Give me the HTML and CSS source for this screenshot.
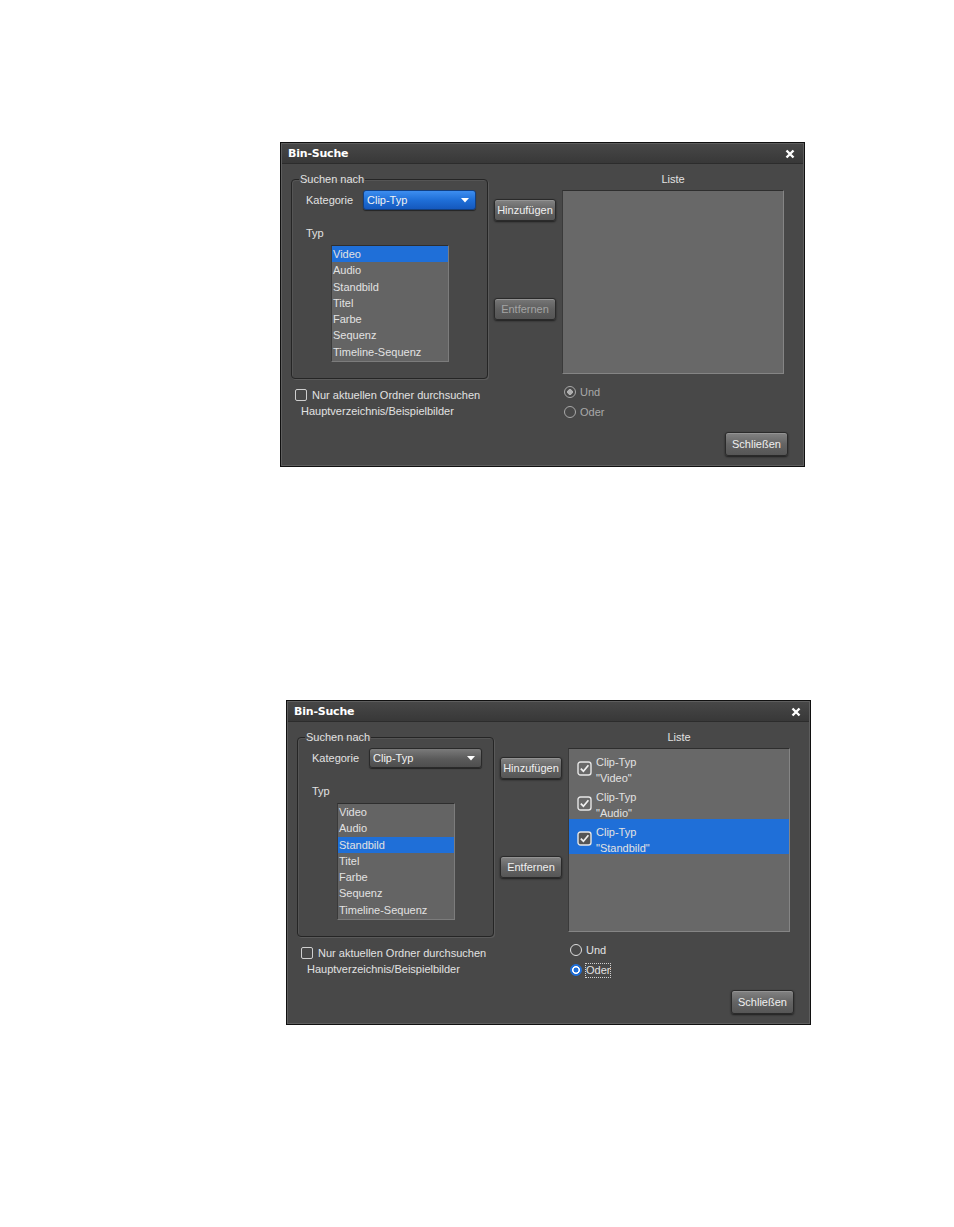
FILE: index.html
```html
<!DOCTYPE html>
<html lang="de">
<head>
  <meta charset="UTF-8">
  <title>Bin-Suche</title>
  <link rel="stylesheet" href="styles.css">
</head>
<body>
  <div class="page">

    <!-- first state: empty list, category focused -->
    <div class="dialog first">
      <div class="titlebar">
        <span class="title">Bin-Suche</span>
        <svg class="close" width="10" height="10" viewBox="0 0 10 10"><path d="M1.5 1.5 L8.5 8.5 M8.5 1.5 L1.5 8.5" stroke="#fff" stroke-width="2.4"/></svg>
      </div>
      <div class="dlg-body">
        <div class="main-row">
          <div class="left-col">
            <fieldset class="group">
              <legend>Suchen nach</legend>
              <div class="cat-row">
                <span class="cat-label">Kategorie</span>
                <div class="combo focus">
                  <span>Clip-Typ</span>
                  <svg width="8" height="5" viewBox="0 0 8 5"><path d="M0 0 H8 L4 4.5 Z" fill="#fff"/></svg>
                </div>
              </div>
              <div class="typ-label">Typ</div>
              <ul class="listbox">
                <li class="sel">Video</li>
                <li>Audio</li>
                <li>Standbild</li>
                <li>Titel</li>
                <li>Farbe</li>
                <li>Sequenz</li>
                <li>Timeline-Sequenz</li>
              </ul>
            </fieldset>
            <div class="opts">
              <div class="opt-line"><span class="check"></span>Nur aktuellen Ordner durchsuchen</div>
              <div class="opt-path">Hauptverzeichnis/Beispielbilder</div>
            </div>
          </div>
          <div class="mid-col">
            <button class="btn add">Hinzufügen</button>
            <button class="btn remove" disabled>Entfernen</button>
          </div>
          <div class="right-col">
            <div class="list-label">Liste</div>
            <div class="result-list"></div>
            <div class="radios disabled">
              <div class="radio-row"><span class="radio on"></span>Und</div>
              <div class="radio-row"><span class="radio"></span>Oder</div>
            </div>
          </div>
        </div>
        <div class="footer">
          <button class="btn close-btn">Schließen</button>
        </div>
      </div>
    </div>

    <!-- second state: three criteria added -->
    <div class="dialog second">
      <div class="titlebar">
        <span class="title">Bin-Suche</span>
        <svg class="close" width="10" height="10" viewBox="0 0 10 10"><path d="M1.5 1.5 L8.5 8.5 M8.5 1.5 L1.5 8.5" stroke="#fff" stroke-width="2.4"/></svg>
      </div>
      <div class="dlg-body">
        <div class="main-row">
          <div class="left-col">
            <fieldset class="group">
              <legend>Suchen nach</legend>
              <div class="cat-row">
                <span class="cat-label">Kategorie</span>
                <div class="combo">
                  <span>Clip-Typ</span>
                  <svg width="8" height="5" viewBox="0 0 8 5"><path d="M0 0 H8 L4 4.5 Z" fill="#fff"/></svg>
                </div>
              </div>
              <div class="typ-label">Typ</div>
              <ul class="listbox">
                <li>Video</li>
                <li>Audio</li>
                <li class="sel">Standbild</li>
                <li>Titel</li>
                <li>Farbe</li>
                <li>Sequenz</li>
                <li>Timeline-Sequenz</li>
              </ul>
            </fieldset>
            <div class="opts">
              <div class="opt-line"><span class="check"></span>Nur aktuellen Ordner durchsuchen</div>
              <div class="opt-path">Hauptverzeichnis/Beispielbilder</div>
            </div>
          </div>
          <div class="mid-col">
            <button class="btn add">Hinzufügen</button>
            <button class="btn remove">Entfernen</button>
          </div>
          <div class="right-col">
            <div class="list-label">Liste</div>
            <div class="result-list">
              <div class="crit">
                <svg class="crit-box" width="15" height="15" viewBox="0 0 15 15"><rect x="1" y="1" width="13" height="13" rx="2.5" fill="none" stroke="#e6e6e6" stroke-width="1.4"/><path d="M3.8 7.6 L6.4 10.2 L11.4 4.2" fill="none" stroke="#f0f0f0" stroke-width="1.7"/></svg>
                <div class="crit-text">Clip-Typ<br>"Video"</div>
              </div>
              <div class="crit">
                <svg class="crit-box" width="15" height="15" viewBox="0 0 15 15"><rect x="1" y="1" width="13" height="13" rx="2.5" fill="none" stroke="#e6e6e6" stroke-width="1.4"/><path d="M3.8 7.6 L6.4 10.2 L11.4 4.2" fill="none" stroke="#f0f0f0" stroke-width="1.7"/></svg>
                <div class="crit-text">Clip-Typ<br>"Audio"</div>
              </div>
              <div class="crit sel">
                <svg class="crit-box" width="15" height="15" viewBox="0 0 15 15"><rect x="1" y="1" width="13" height="13" rx="2.5" fill="#555" stroke="#e6e6e6" stroke-width="1.4"/><path d="M3.8 7.6 L6.4 10.2 L11.4 4.2" fill="none" stroke="#f0f0f0" stroke-width="1.7"/></svg>
                <div class="crit-text">Clip-Typ<br>"Standbild"</div>
              </div>
            </div>
            <div class="radios">
              <div class="radio-row"><span class="radio"></span>Und</div>
              <div class="radio-row"><span class="radio blue"></span><span class="focus-label">Oder</span></div>
            </div>
          </div>
        </div>
        <div class="footer">
          <button class="btn close-btn">Schließen</button>
        </div>
      </div>
    </div>

  </div>
</body>
</html>
```

FILE: styles.css
```css
body {
  margin: 0;
  background: #fff;
  font-family: 'Liberation Sans', Arial, sans-serif;
  font-size: 11px;
}

.page {
  width: 954px;
  height: 1227px;
  display: flex;
  flex-direction: column;
  padding-top: 142px;
  box-sizing: border-box;
}

.dialog {
  width: 525px;
  height: 325px;
  box-sizing: border-box;
  background: #484848;
  border: 1px solid #101010;
  box-shadow: inset 0 0 0 1px #5e5e5e;
  color: #e2e2e2;
  display: flex;
  flex-direction: column;
}

.dialog.first {
  margin-left: 280px;
}

.dialog.second {
  margin-left: 286px;
  margin-top: 233px;
}

.titlebar {
  height: 19px;
  display: flex;
  align-items: center;
  justify-content: space-between;
  padding: 0 8px 0 6px;
  background: linear-gradient(#474747, #383838);
  border-bottom: 1px solid #2c2c2c;
  margin: 1px 1px 0;
}

.title {
  font-family: 'DejaVu Sans', sans-serif;
  font-weight: bold;
  font-size: 11px;
  color: #fff;
  letter-spacing: -0.2px;
}

.dlg-body {
  flex: 1;
  display: flex;
  flex-direction: column;
}

.main-row {
  display: flex;
  gap: 6px;
  padding-left: 10px;
}

.left-col {
  width: 197px;
  padding-top: 8px;
}

.group {
  margin: 0;
  padding: 0 0 15px 14px;
  border: 1px solid #252525;
  border-radius: 4px;
  box-shadow: 1px 1px 0 #5a5a5a, inset 1px 1px 0 #555;
  height: 207px;
  box-sizing: border-box;
}

.group legend {
  padding: 0 1px;
  margin-left: -7px;
  line-height: 14px;
}

.cat-row {
  display: flex;
  align-items: center;
  margin-top: 4px;
}

.cat-label {
  width: 57px;
}

.combo {
  width: 113px;
  height: 20px;
  box-sizing: border-box;
  border: 1px solid #2a2a2a;
  border-radius: 3px;
  background: linear-gradient(#7a7a7a, #5a5a5a 55%, #4e4e4e);
  box-shadow: 0 1px 1px rgba(0, 0, 0, 0.5);
  display: flex;
  align-items: center;
  justify-content: space-between;
  padding: 0 6px 0 3px;
  color: #f2f2f2;
}

.combo.focus {
  background: linear-gradient(#3d8ef0, #1f6fd8 50%, #1558bd);
  border-color: #123f80;
}

.typ-label {
  margin-top: 16px;
  line-height: 14px;
}

.listbox {
  list-style: none;
  margin: 5px 0 0 25px;
  padding: 0;
  width: 118px;
  height: 117px;
  box-sizing: border-box;
  background: #646464;
  border: 1px solid #7c7c7c;
  border-top-color: #2e2e2e;
  border-left-color: #3a3a3a;
}

.listbox li {
  height: 16.3px;
  line-height: 16px;
  padding-left: 1px;
}

.listbox li.sel {
  background: #1f6fd8;
}

.opts {
  padding: 8px 0 0 4px;
}

.opt-line {
  display: flex;
  align-items: center;
  gap: 5px;
  line-height: 16px;
}

.check {
  width: 10px;
  height: 10px;
  border: 1px solid #cfcfcf;
  border-radius: 2px;
}

.opt-path {
  line-height: 16px;
  padding-left: 6px;
}

.mid-col {
  width: 62px;
  display: flex;
  flex-direction: column;
  padding-top: 35px;
}

.btn {
  font-family: 'Liberation Sans', Arial, sans-serif;
  font-size: 11px;
  color: #f0f0f0;
  height: 22px;
  padding: 0;
  border: 1px solid #2a2a2a;
  border-radius: 3px;
  background: linear-gradient(#838383, #646464 50%, #565656);
  box-shadow: 0 1px 2px rgba(0, 0, 0, 0.6), inset 0 1px 0 #939393;
}

.btn.remove {
  margin-top: 77px;
}

.btn:disabled {
  color: #a4a4a4;
  background: linear-gradient(#777, #5f5f5f 50%, #555);
}

.right-col {
  width: 222px;
  padding-top: 8px;
}

.list-label {
  text-align: center;
  line-height: 14px;
}

.result-list {
  margin-top: 4px;
  height: 184px;
  box-sizing: border-box;
  background: #686868;
  border: 1px solid #858585;
  border-top-color: #2e2e2e;
  border-left-color: #3a3a3a;
}

.crit {
  height: 35px;
  box-sizing: border-box;
  display: flex;
  align-items: flex-start;
  gap: 4px;
  padding: 5px 0 0 8px;
}

.crit.sel {
  background: #1f6fd8;
}

.crit-box {
  margin-top: 7px;
}

.crit-text {
  line-height: 16px;
}

.radios {
  padding: 8px 0 0 2px;
}

.radios.disabled {
  color: #a8a8a8;
}

.radio-row {
  height: 20px;
  display: flex;
  align-items: center;
  gap: 4px;
}

.radio {
  width: 12px;
  height: 12px;
  box-sizing: border-box;
  border: 1px solid #dedede;
  border-radius: 50%;
}

.radios.disabled .radio {
  border-color: #a8a8a8;
}

.radio.on {
  background: radial-gradient(circle, #b0b0b0 0 2.6px, transparent 3px);
}

.radio.blue {
  border-color: #1f6fd8;
  background: radial-gradient(circle, #1f6fd8 0 2.3px, #fff 2.7px 3.7px, #1f6fd8 4.1px);
}

.focus-label {
  outline: 1px dotted #d0d0d0;
  line-height: 13px;
}

.footer {
  display: flex;
  justify-content: flex-end;
  padding: 10px 16px 0 0;
}

.close-btn {
  width: 63px;
  height: 24px;
}
```
